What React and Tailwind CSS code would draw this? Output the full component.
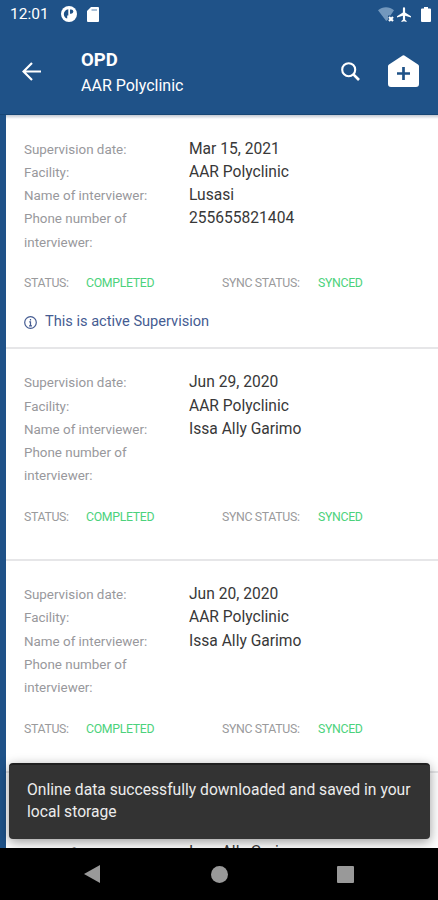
import React from 'react'

const supervisions = [
  { id: 1, date: 'Mar 15, 2021', facility: 'AAR Polyclinic', interviewer: 'Lusasi', phone: '255655821404', active: true },
  { id: 2, date: 'Jun 29, 2020', facility: 'AAR Polyclinic', interviewer: 'Issa Ally Garimo', phone: '' },
  { id: 3, date: 'Jun 20, 2020', facility: 'AAR Polyclinic', interviewer: 'Issa Ally Garimo', phone: '' },
  { id: 4, date: 'Jun 19, 2020', facility: 'AAR Polyclinic', interviewer: 'Issa Ally Garimo', phone: '' },
]

const StatusBar = () => (
  <div className="flex h-7 items-center pl-[10px] pr-[7px] text-white">
    <span className="w-[51px] pt-[2px] text-[15.5px] leading-none">12:01</span>
    <svg className="h-4 w-4" viewBox="0 0 16 16">
      <circle cx="8" cy="8" r="8" fill="#fff" />
      <path d="M7.300 3.200v6.300H6.200v3C4.300 12 2.800 10.200 2.800 8s1.800-4.500 4.500-4.800z" fill="#1f5288" />
      <path d="M9 3.500h1.200a2.100 2.100 0 0 1 0 4.200H9z" fill="#1f5288" />
    </svg>
    <svg className="ml-[10px] h-[15px] w-3" viewBox="0 0 12 15">
      <path d="M4 0h7a1 1 0 0 1 1 1v13a1 1 0 0 1-1 1H1a1 1 0 0 1-1-1V4z" fill="#fff" />
      <path d="M4.500 3h5.500" stroke="#7398bd" strokeWidth="1.200" />
    </svg>
    <svg className="ml-auto h-[15px] w-4" viewBox="0 0 16 15">
      <path d="M0 3.200C4.500-.7 11.500-.7 16 3.200L12.500 8.500H10v4L8.200 14z" fill="#7398bd" />
      <path d="M11 10l4 4M15 10l-4 4" stroke="#fff" strokeWidth="2.200" />
    </svg>
    <svg className="ml-[3px] h-[15px] w-[14px]" viewBox="2.500 1.500 19 20.500" preserveAspectRatio="none">
      <path d="M21.500 16v-2l-8-5V3.500a1.500 1.500 0 0 0-3 0V9l-8 5v2l8-2.500V19l-2 1.500V22l3.500-1 3.500 1v-1.500L13.500 19v-5.500z" fill="#fff" />
    </svg>
    <svg className="ml-[10px] h-[15px] w-[10px]" viewBox="0 0 10 15">
      <path d="M3 0h4v1.500h2a1 1 0 0 1 1 1V14a1 1 0 0 1-1 1H1a1 1 0 0 1-1-1V2.500a1 1 0 0 1 1-1h2z" fill="#fff" />
    </svg>
  </div>
)

const AppBar = () => (
  <header className="h-[115px] shrink-0 border-b border-[#174675] bg-[#1f5288]">
    <StatusBar />
    <div className="flex h-[87px] items-center pl-[22px] pr-[19px] text-white">
      <svg className="h-[19px] w-[19px]" viewBox="0 0 19 19" fill="none" stroke="#fff" strokeWidth="2.200">
        <path d="M19 9.500H1.500M10 1L1.500 9.500 10 18" />
      </svg>
      <div className="ml-10 flex-1 pt-px">
        <h1 className="text-[18.500px] font-bold leading-[26px]">OPD</h1>
        <p className="text-[16px] leading-[25px]">AAR Polyclinic</p>
      </div>
      <svg className="h-[19px] w-[19px]" viewBox="0 0 19 19" fill="none" stroke="#fff" strokeWidth="2.100">
        <circle cx="7.700" cy="7.700" r="6.500" />
        <path d="M12.400 12.400l5.600 5.600" strokeWidth="2.700" />
      </svg>
      <svg className="mb-[2px] ml-[28px] h-8 w-[31px]" viewBox="0 0 31 32">
        <path d="M14.700.5a1.500 1.500 0 0 1 1.600 0L30 9.500a2 2 0 0 1 1 1.700V29a3 3 0 0 1-3 3H3a3 3 0 0 1-3-3V11.200a2 2 0 0 1 1-1.700z" fill="#fff" />
        <path d="M15.500 12v13M9 18.500h13" stroke="#1f5288" strokeWidth="2.700" />
      </svg>
    </div>
  </header>
)

const Field = ({ label, value }) => (
  <div className="flex leading-[23.250px]">
    <span className="w-[165px] pr-8 text-[13.400px] text-[#98989c]">{label}</span>
    <span className="text-[15.600px] text-[#383838]">{value}</span>
  </div>
)

const SupervisionCard = ({ item }) => (
  <div className="border-b-2 border-[#e6e6e8] pb-[15px] pl-[18px] pt-[22px]">
    <Field label="Supervision date:" value={item.date} />
    <Field label="Facility:" value={item.facility} />
    <Field label="Name of interviewer:" value={item.interviewer} />
    <Field label="Phone number of interviewer:" value={item.phone} />
    <div className="mt-[19.500px] flex h-5 items-center text-[12.300px] tracking-[-0.330px]">
      <span className="w-[62px] text-[#9a9a9c]">STATUS:</span>
      <span className="w-[136px] text-[#4cd27c]">COMPLETED</span>
      <span className="w-[96px] text-[#9a9a9c]">SYNC STATUS:</span>
      <span className="text-[#4cd27c]">SYNCED</span>
    </div>
    {item.active ? (
      <div className="mt-[19px] flex h-5 items-center text-[#455c92]">
        <svg className="mr-[8px] h-[13px] w-[13px]" viewBox="0 0 13 13" fill="none" stroke="currentColor">
          <circle cx="6.500" cy="6.500" r="5.800" strokeWidth="1.200" />
          <path d="M6.500 3v1.400M5.200 5.800h1.300v4M5 9.800h3" strokeWidth="1.200" />
        </svg>
        <span className="text-[14.600px]">This is active Supervision</span>
      </div>
    ) : (
      <div className="h-[17px]" />
    )}
  </div>
)

export default function App() {
  return (
    <div className="relative flex h-[900px] w-[438px] flex-col overflow-hidden bg-white font-['Roboto','Noto_Sans',sans-serif]">
      <AppBar />
      <main className="min-h-0 flex-1 overflow-hidden border-l-[6px] border-[#1f5288] bg-white">
        <div className="h-1 bg-linear-to-b from-[#c3c8d2] to-white" />
        <div className="-mt-[3.500px]">
          {supervisions.map((item) => <SupervisionCard key={item.id} item={item} />)}
        </div>
      </main>

      {/* Snackbar */}
      <div className="absolute bottom-[61px] left-[9px] right-[8px] h-[76px] rounded border-t-2 border-[#202020] bg-[#333] px-[18px] pt-[13.500px] text-[15.650px] leading-[22.500px] text-[#ececec] shadow-[0_3px_12px_rgba(0,0,0,0.4)]">
        Online data successfully downloaded and saved in your local storage
      </div>

      <nav className="relative flex h-[52px] shrink-0 items-center bg-black pl-[84px]">
        <svg className="h-[18px] w-4" viewBox="0 0 16 18"><path d="M16 0v18L0 9z" fill="#999" /></svg>
        <span className="ml-[111px] h-[17px] w-[17px] rounded-full bg-[#999]" />
        <span className="ml-[109px] h-[17px] w-[17px] rounded-[1px] bg-[#999]" />
      </nav>
    </div>
  )
}
